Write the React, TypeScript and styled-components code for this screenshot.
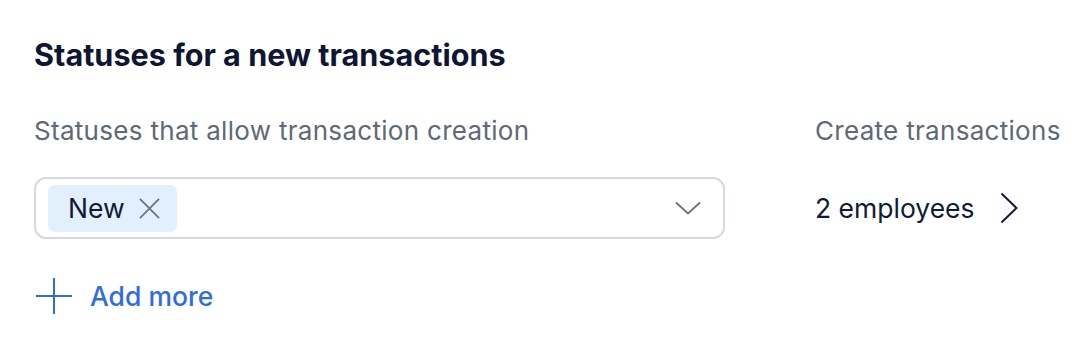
import React from 'react';
import styled, { createGlobalStyle } from 'styled-components';

const GlobalStyle = createGlobalStyle`
  body {
    margin: 0;
    background: #fff;
    font-family: Inter, 'Noto Sans', sans-serif;
  }
`;

const Page = styled.div`
  padding: 37px 34px 0;
`;

const Title = styled.h2`
  margin: 0 0 42px;
  font-size: 30.6px;
  line-height: 36px;
  font-weight: 700;
  color: #0e1633;
`;

const Grid = styled.div`
  display: grid;
  grid-template-columns: 691px max-content;
  column-gap: 90px;
  row-gap: 30px;
  align-items: center;
`;

const Label = styled.div`
  font-size: 26px;
  line-height: 32px;
  letter-spacing: 0.3px;
  white-space: nowrap;
  color: #5e6977;
`;

const Select = styled.div`
  box-sizing: border-box;
  height: 62px;
  border: 2px solid #d5d9e2;
  border-radius: 12px;
  display: flex;
  align-items: center;
  justify-content: space-between;
  padding: 0 22px 0 12px;
`;

const Chip = styled.span`
  display: inline-flex;
  align-items: center;
  gap: 13px;
  height: 47px;
  padding: 0 16px 0 20px;
  border-radius: 7px;
  background: #e2effc;
  font-size: 26.5px;
  color: #111a36;
`;

const Value = styled.div`
  display: flex;
  align-items: center;
  gap: 25px;
  font-size: 26.5px;
  white-space: nowrap;
  color: #111a36;
`;

const AddMore = styled.button`
  display: flex;
  align-items: center;
  gap: 18px;
  margin-top: 39px;
  padding: 0 0 0 2px;
  border: 0;
  background: none;
  font-family: inherit;
  font-size: 26.5px;
  font-weight: 500;
  color: #2f6ce0;
  cursor: pointer;
`;

const Icon = styled.svg`
  display: block;
  flex-shrink: 0;
`;

export default function App() {
  return (
    <>
      <GlobalStyle />
      <Page>
        <Title>Statuses for a new transactions</Title>
        <Grid>
          <Label>Statuses that allow transaction creation</Label>
          <Label>Create transactions</Label>
          <Select>
            <Chip>
              New
              <Icon width="23" height="23" viewBox="0 0 24 24" fill="none" stroke="#6b7280" strokeWidth="1.8">
                <path d="M2 2l20 20M22 2L2 22" />
              </Icon>
            </Chip>
            <Icon width="26" height="14" viewBox="0 0 26 14" fill="none" stroke="#6b7280" strokeWidth="1.8">
              <path d="M1 1.5l12 11 12-11" />
            </Icon>
          </Select>
          <Value>
            2 employees
            <Icon width="18" height="32" viewBox="0 0 18 32" fill="none" stroke="#111a36" strokeWidth="2">
              <path d="M1.5 1.5l15 14.5-15 14.5" />
            </Icon>
          </Value>
        </Grid>
        <AddMore>
          <Icon width="36" height="36" viewBox="0 0 36 36" fill="none" stroke="#2f6ce0" strokeWidth="2">
            <path d="M18 0v36M0 18h36" />
          </Icon>
          Add more
        </AddMore>
      </Page>
    </>
  );
}
